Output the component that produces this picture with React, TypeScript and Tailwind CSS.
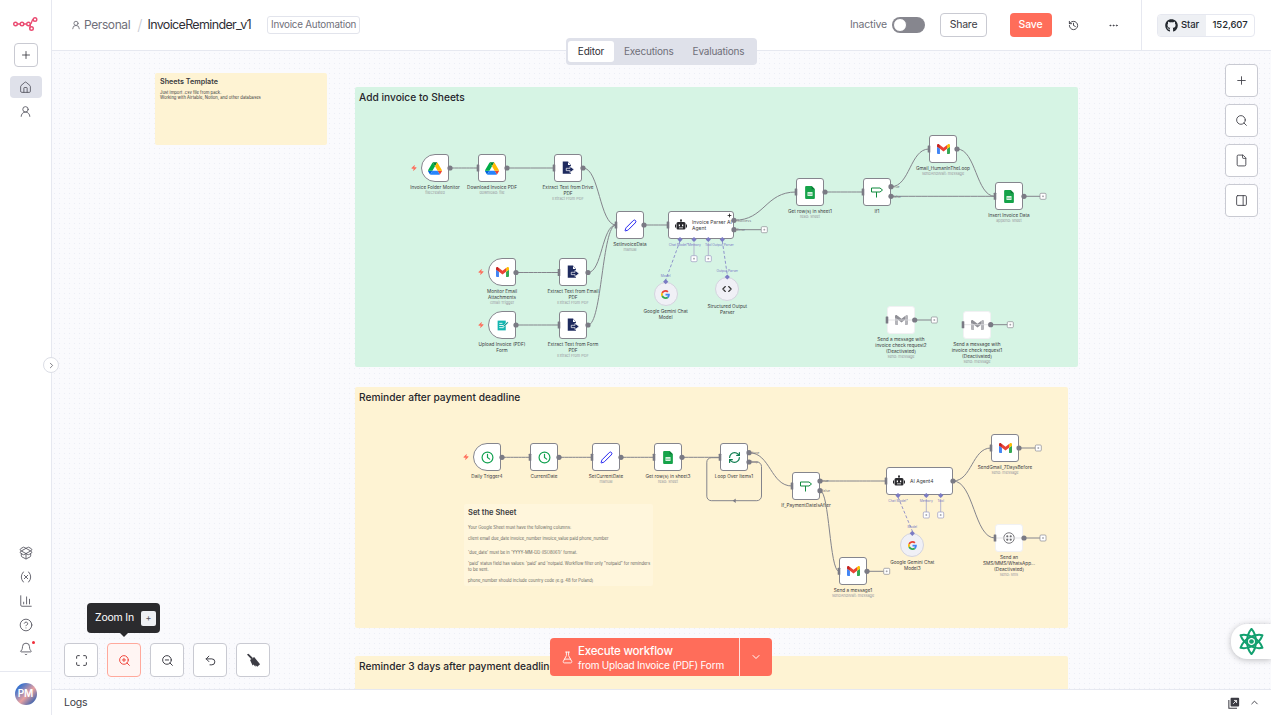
import { Bell, ChartColumn, ChevronDown, ChevronRight, ChevronUp, CircleHelp, Code, Ellipsis, File, FlaskConical, History, House, Maximize, PackageOpen, PanelRight, Pen, Plus, RefreshCw, Search, Undo2, UserRound, Variable, Zap, ZoomIn, ZoomOut } from 'lucide-react'
import React from 'react'
import { FaGithub } from 'react-icons/fa'

function DriveIcon() {
  return (
    <svg viewBox="0 0 87.3 78" className="h-[13px] w-[14px]">
      <path fill="#0066da" d="m6.6 66.85 3.85 6.65c.8 1.4 1.95 2.5 3.3 3.3l13.75-23.8h-27.5c0 1.55.4 3.1 1.2 4.5z" />
      <path fill="#00ac47" d="m43.65 25-13.75-23.8c-1.35.8-2.5 1.9-3.3 3.3l-25.4 44a9.06 9.06 0 0 0 -1.2 4.5h27.5z" />
      <path fill="#ea4335" d="m73.55 76.8c1.35-.8 2.5-1.9 3.3-3.3l1.6-2.75 7.65-13.25c.8-1.4 1.2-2.95 1.2-4.5h-27.502l5.852 11.5z" />
      <path fill="#00832d" d="m43.65 25 13.75-23.8c-1.35-.8-2.9-1.2-4.5-1.2h-18.5c-1.6 0-3.15.45-4.5 1.2z" />
      <path fill="#2684fc" d="m59.8 53h-32.3l-13.75 23.8c1.35.8 2.9 1.2 4.5 1.2h50.8c1.6 0 3.15-.45 4.5-1.2z" />
      <path fill="#ffba00" d="m73.4 26.5-12.7-22c-.8-1.4-1.95-2.5-3.3-3.3l-13.75 23.8 16.15 28h27.45c0-1.55-.4-3.1-1.2-4.5z" />
    </svg>
  )
}

function GmailIcon({ off }: { off?: boolean }) {
  if (off) {
    return (
      <svg viewBox="52 42 88 66" className="h-[10px] w-[13px]">
        <path fill="#b4b4b9" d="M58 108h14V74L52 59v43c0 3.32 2.69 6 6 6M120 108h14c3.32 0 6-2.69 6-6V59l-20 15M120 48v26l20-15v-8c0-7.42-8.47-11.65-14.4-7.2" />
        <path fill="#8f8f96" d="M72 74V48l24 18 24-18v26L96 92M52 51v8l20 15V48l-5.6-4.2c-5.94-4.45-14.4-.22-14.4 7.2" />
      </svg>
    )
  }
  return (
    <svg viewBox="52 42 88 66" className="h-[10px] w-[13px]">
      <path fill="#4285f4" d="M58 108h14V74L52 59v43c0 3.32 2.69 6 6 6" />
      <path fill="#34a853" d="M120 108h14c3.32 0 6-2.69 6-6V59l-20 15" />
      <path fill="#fbbc04" d="M120 48v26l20-15v-8c0-7.42-8.47-11.65-14.4-7.2" />
      <path fill="#ea4335" d="M72 74V48l24 18 24-18v26L96 92" />
      <path fill="#c5221f" d="M52 51v8l20 15V48l-5.6-4.2c-5.94-4.45-14.4-.22-14.4 7.2" />
    </svg>
  )
}

function GoogleIcon() {
  return (
    <svg viewBox="0 0 48 48" className="h-[9px] w-[9px]">
      <path fill="#EA4335" d="M24 9.5c3.54 0 6.71 1.22 9.21 3.6l6.85-6.85C35.9 2.38 30.47 0 24 0 14.62 0 6.51 5.38 2.56 13.22l7.98 6.19C12.43 13.72 17.74 9.5 24 9.5z" />
      <path fill="#4285F4" d="M46.98 24.55c0-1.57-.15-3.09-.38-4.55H24v9.02h12.94c-.58 2.96-2.26 5.48-4.78 7.18l7.73 6c4.51-4.18 7.09-10.36 7.09-17.65z" />
      <path fill="#FBBC05" d="M10.53 28.59c-.48-1.45-.76-2.99-.76-4.59s.27-3.14.76-4.59l-7.98-6.19C.92 16.46 0 20.12 0 24c0 3.88.92 7.54 2.56 10.78l7.97-6.19z" />
      <path fill="#34A853" d="M24 48c6.48 0 11.93-2.13 15.89-5.81l-7.73-6c-2.15 1.45-4.92 2.3-8.16 2.3-6.26 0-11.57-4.22-13.47-9.91l-7.98 6.19C6.51 42.62 14.62 48 24 48z" />
    </svg>
  )
}

function SheetsIcon() {
  return (
    <svg viewBox="0 0 18 24" className="h-[13px] w-[10px]">
      <path fill="#16a34a" d="M2 0h10l6 6v16a2 2 0 0 1-2 2H2a2 2 0 0 1-2-2V2a2 2 0 0 1 2-2z" />
      <path fill="#0d7a36" d="M12 0l6 6h-6z" />
      <path fill="#fff" d="M4.5 11h9v7.5h-9zM6 12.4v1.6h2.3v-1.6zM9.7 12.4v1.6H12v-1.6zM6 15.4V17h2.3v-1.6zM9.7 15.4V17H12v-1.6z" fillRule="evenodd" />
    </svg>
  )
}

function ExtractIcon() {
  return (
    <svg viewBox="0 0 24 24" className="h-[14px] w-[14px]">
      <path fill="#1e2a5e" d="M3 1h9l5 5.5V22H3z" />
      <path fill="#fff" d="M12 1.5v5.5h5z" />
      <path fill="#1e2a5e" stroke="#fff" strokeWidth="1.2" d="M9 12.5h6.5V9l7 5.5-7 5.5v-3.5H9z" />
    </svg>
  )
}

function FormIcon() {
  return (
    <svg viewBox="0 0 24 24" className="h-[13px] w-[13px]">
      <path fill="#12b5b0" d="M3 3h15v18H3z" />
      <path stroke="#fff" strokeWidth="1.6" d="M6 8h6M6 12h8M6 16h8" />
      <path fill="#0f8f8c" stroke="#fff" strokeWidth="1" d="M14 12l7-7 2 2-7 7-3 1z" />
    </svg>
  )
}

function SignpostIcon() {
  return (
    <svg viewBox="0 0 24 24" className="h-[12px] w-[12px]" fill="none" stroke="#0f8a3c" strokeWidth="2" strokeLinejoin="round">
      <path d="M1 4h17l5 4-5 4H1z" />
      <path d="M11 12v11" />
    </svg>
  )
}

function ClockIcon() {
  return (
    <svg viewBox="0 0 24 24" className="h-[13px] w-[13px]" fill="none" stroke="#12a150" strokeWidth="2.2" strokeLinecap="round">
      <circle cx="12" cy="12" r="10" />
      <path d="M12 6v6l4 3" />
    </svg>
  )
}

function BotIcon() {
  return (
    <svg viewBox="0 0 24 24" className="h-[12px] w-[12px]" fill="#2a2a2e">
      <circle cx="12" cy="2.5" r="2" />
      <path d="M11 3h2v3h-2z" />
      <path d="M6 6h12a3 3 0 0 1 3 3v9a3 3 0 0 1-3 3H6a3 3 0 0 1-3-3V9a3 3 0 0 1 3-3zm1.5 5v3.5h2.5V11zm6.5 0v3.5h2.5V11zM8 17v1.5h8V17z" fillRule="evenodd" />
      <path d="M0 11h2v6H0zM22 11h2v6h-2z" />
    </svg>
  )
}

function TwilioIcon() {
  return (
    <svg viewBox="0 0 24 24" className="h-[12px] w-[12px]" fill="none" stroke="#6b6b70" strokeWidth="1.8">
      <circle cx="12" cy="12" r="10.5" />
      <circle cx="8.6" cy="8.6" r="2.2" fill="#6b6b70" stroke="none" />
      <circle cx="15.4" cy="8.6" r="2.2" fill="#6b6b70" stroke="none" />
      <circle cx="8.6" cy="15.4" r="2.2" fill="#6b6b70" stroke="none" />
      <circle cx="15.4" cy="15.4" r="2.2" fill="#6b6b70" stroke="none" />
    </svg>
  )
}

function LogoIcon() {
  return (
    <svg viewBox="0 0 25 14" className="h-[14px] w-[25px]" fill="none" stroke="#ea4b71" strokeWidth="1.4">
      <circle cx="2.5" cy="7" r="1.8" />
      <circle cx="9" cy="7" r="1.8" />
      <circle cx="15.5" cy="7" r="1.8" />
      <circle cx="22" cy="2.5" r="1.8" />
      <circle cx="18.5" cy="11.5" r="1.8" />
      <path d="M4.3 7h2.9M10.8 7h2.9M17.3 7c2 0 1-4.5 2.9-4.5M17.3 7c0 2.5-.5 4.5-.6 4.5" />
    </svg>
  )
}

function ChatIcon() {
  return (
    <svg viewBox="0 0 32 32" className="h-[27px] w-[27px]" fill="none" stroke="#12a06f" strokeWidth="2.4" strokeLinejoin="round">
      <path d="M16 1C23 9 23 23 16 31C9 23 9 9 16 1z" />
      <path d="M16 1C23 9 23 23 16 31C9 23 9 9 16 1z" transform="rotate(60 16 16)" />
      <path d="M16 1C23 9 23 23 16 31C9 23 9 9 16 1z" transform="rotate(120 16 16)" />
      <circle cx="16" cy="16" r="2.8" fill="#12a06f" stroke="none" />
    </svg>
  )
}

function BroomIcon() {
  return (
    <svg viewBox="0 0 24 24" className="h-[15px] w-[15px]" fill="#3c3c44">
      <path d="M1.5 2.500L4 1l7 7-2.500 2z" />
      <path d="M6.500 11L13 6.500 22.500 18 18 22l-2.500-2.500-.5 2.500-3-3.500-1.500 1.500z" />
    </svg>
  )
}

function LogsViewIcon() {
  return (
    <svg viewBox="0 0 14 14" className="h-[12px] w-[12px]" fill="none">
      <path d="M1 3.5V13h9.500" stroke="#3c3c44" strokeWidth="1.2" />
      <rect x="3" y="1" width="10" height="10" rx="1" fill="#3c3c44" />
      <path d="M6 8l4-4M7 4h3v3" stroke="#fff" strokeWidth="1" />
    </svg>
  )
}

const penIcon = <Pen className="h-[13px] w-[13px] text-[#1d1df0]" strokeWidth={1.8} />
const gmailIcon = <GmailIcon />
const sheetsIcon = <SheetsIcon />
const ifIcon = <SignpostIcon />
const clockIcon = <ClockIcon />

type FlowNode = {
  x: number
  y: number
  label: string[]
  sub?: string
  icon: React.ReactNode
  trigger?: boolean
  off?: boolean
}

const nodes: FlowNode[] = [
  { x: 421, y: 154, label: ['Invoice Folder Monitor'], sub: 'fileCreated', icon: <DriveIcon />, trigger: true },
  { x: 478, y: 154, label: ['Download Invoice PDF'], sub: 'download: file', icon: <DriveIcon /> },
  { x: 554, y: 154, label: ['Extract Text from Drive', 'PDF'], sub: 'Extract From PDF', icon: <ExtractIcon /> },
  { x: 616, y: 211, label: ['SetInvoiceData'], sub: 'manual', icon: penIcon },
  { x: 488, y: 258, label: ['Monitor Email', 'Attachments'], sub: 'Gmail Trigger', icon: gmailIcon, trigger: true },
  { x: 559, y: 258, label: ['Extract Text from Email', 'PDF'], sub: 'Extract From PDF', icon: <ExtractIcon /> },
  { x: 488, y: 311, label: ['Upload Invoice (PDF)', 'Form'], icon: <FormIcon />, trigger: true },
  { x: 559, y: 311, label: ['Extract Text from Form', 'PDF'], sub: 'Extract From PDF', icon: <ExtractIcon /> },
  { x: 796, y: 178, label: ['Get row(s) in sheet1'], sub: 'read: sheet', icon: sheetsIcon },
  { x: 863, y: 178, label: ['If1'], icon: ifIcon },
  { x: 929, y: 135, label: ['Gmail_HumanInTheLoop'], sub: 'sendAndWait: message', icon: gmailIcon },
  { x: 995, y: 182, label: ['Insert Invoice Data'], sub: 'append: sheet', icon: sheetsIcon },
  { x: 887, y: 306, label: ['Send a message with', 'invoice check request2', '(Deactivated)'], sub: 'send: message', icon: <GmailIcon off />, off: true },
  { x: 963, y: 311, label: ['Send a message with', 'invoice check request1', '(Deactivated)'], sub: 'send: message', icon: <GmailIcon off />, off: true },
  { x: 473, y: 443, label: ['Daily Trigger4'], icon: clockIcon, trigger: true },
  { x: 530, y: 443, label: ['CurrentDate'], icon: clockIcon },
  { x: 592, y: 443, label: ['SetCurrentDate'], sub: 'manual', icon: penIcon },
  { x: 654, y: 443, label: ['Get row(s) in sheet3'], sub: 'read: sheet', icon: sheetsIcon },
  { x: 720, y: 443, label: ['Loop Over Items1'], icon: <RefreshCw className="h-[13px] w-[13px] text-[#0f7d50]" strokeWidth={2.2} /> },
  { x: 792, y: 472, label: ['If_PaymentDateIsAfter'], icon: ifIcon },
  { x: 991, y: 434, label: ['SendGmail_7DaysBefore'], sub: 'send: message', icon: gmailIcon },
  { x: 995, y: 524, label: ['Send an', 'SMS/MMS/WhatsApp...', '(Deactivated)'], sub: 'send: sms', icon: <TwilioIcon />, off: true },
  { x: 839, y: 557, label: ['Send a message1'], sub: 'sendAndWait: message', icon: gmailIcon },
]

const agents = [
  { x: 668, y: 211, w: 66, title: ['Invoice Parser AI', 'Agent'], corner: true },
  { x: 886, y: 467, w: 67, title: ['AI Agent4'], corner: false },
]

const circles = [
  { cx: 665.7, cy: 294, icon: <GoogleIcon />, label: ['Google Gemini Chat', 'Model'] },
  { cx: 727.3, cy: 289.3, icon: <Code className="h-[10px] w-[10px] text-[#333]" strokeWidth={2.6} />, label: ['Structured Output', 'Parser'] },
  { cx: 912.3, cy: 545, icon: <GoogleIcon />, label: ['Google Gemini Chat', 'Model3'] },
]

function bez(x1: number, y1: number, x2: number, y2: number) {
  const m = (x1 + x2) / 2
  return `M${x1} ${y1}C${m} ${y1} ${m} ${y2} ${x2} ${y2}`
}

const edges = [
  bez(450, 168, 478, 168),
  bez(507, 168, 554, 168),
  bez(583, 168, 616, 225),
  bez(516, 272.5, 559, 272.5),
  bez(588, 272.5, 616, 225),
  bez(516, 325, 559, 325),
  bez(588, 325, 616, 225),
  bez(644, 225, 668, 225),
  bez(734, 220.3, 796, 192),
  bez(825, 192, 863, 192),
  bez(891, 186.7, 929, 149),
  bez(891, 196.3, 995, 196.3),
  bez(957, 149, 995, 196.3),
  bez(502, 457.3, 530, 457.3),
  bez(559, 457.3, 592, 457.3),
  bez(621, 457.3, 654, 457.3),
  bez(682, 457.3, 720, 457.3),
  bez(749, 452.7, 792, 486),
  'M749 462h8a4.5 4.5 0 0 1 4.5 4.5v29.5a4.700 4.700 0 0 1-4.700 4.700h-45.5a4.5 4.5 0 0 1-4.5-4.5v-34a4.5 4.5 0 0 1 4.5-4.5h8.5',
  bez(820, 481, 886, 481),
  bez(820, 490.7, 839, 571.3),
  bez(953, 481, 991, 448),
  bez(953, 481, 995, 538),
]

const stubs = [
  [734, 229.7, 764.3],
  [1024, 196.3, 1043],
  [914.7, 320, 934.3],
  [990.7, 324.7, 1010.3],
  [1019, 448, 1038.3],
  [1024, 538, 1043],
  [867, 571.3, 886.7],
]

// grey line through deactivated nodes
const strikes = [
  [887, 915, 320],
  [963, 991, 324.7],
  [995, 1023, 538],
]

const outPorts = [
  [450, 168], [507, 168], [583, 168], [516, 272.5], [588, 272.5], [516, 325], [588, 325], [644, 225],
  [734, 220.3], [734, 229.7], [825, 192], [891, 186.7], [891, 196.3], [957, 149], [1024, 196.3],
  [914.7, 320], [990.7, 324.7], [502, 457.3], [559, 457.3], [621, 457.3], [682, 457.3], [749, 452.7], [749, 462],
  [820, 481], [820, 490.7], [953, 481], [1019, 448], [1024, 538], [867, 571.3],
]

const inPorts = [
  [478, 168], [554, 168], [616, 225], [559, 272.5], [559, 325], [668, 225], [796, 192], [863, 192], [929, 149], [995, 196.3],
  [887, 320], [963, 324.7], [530, 457.3], [592, 457.3], [654, 457.3], [720, 457.3], [792, 486], [886, 481], [991, 448], [995, 538], [839, 571.3],
]

const diamonds = [
  [680, 239.5], [694, 239.5], [708.3, 239.5], [722.3, 239.5], [665.7, 281.7], [727.3, 277],
  [898, 495.5], [926.3, 495.5], [940.7, 495.5], [912.3, 533.3],
]

const purpleStubs = [
  [694, 258.7], [708.3, 258.7], [926.3, 515], [940.7, 515],
]

const portLabels = [
  { x: 737, y: 221.5, t: 'Success' },
  { x: 737, y: 231, t: 'Error' },
  { x: 893, y: 188, t: 'true' },
  { x: 893, y: 197.5, t: 'false' },
  { x: 751, y: 454, t: 'done' },
  { x: 751, y: 463.2, t: 'loop' },
  { x: 822, y: 482.2, t: 'true' },
  { x: 822, y: 492, t: 'false' },
]

const bottomLabels = [
  { x: 678.5, y: 245.5, t: 'Chat Model*' },
  { x: 694.5, y: 245.5, t: 'Memory' },
  { x: 708.3, y: 245.5, t: 'Tool' },
  { x: 723, y: 245.5, t: 'Output Parser' },
  { x: 665.7, y: 277, t: 'Model' },
  { x: 727.3, y: 272, t: 'Output Parser' },
  { x: 898, y: 502, t: 'Chat Model*' },
  { x: 926.3, y: 502, t: 'Memory' },
  { x: 940.7, y: 502, t: 'Tool' },
  { x: 912.3, y: 528, t: 'Model' },
]

function Node({ n }: { n: FlowNode }) {
  return (
    <div className="absolute w-[28px]" style={{ left: n.x - 52, top: n.y - 51 }}>
      {n.trigger && <Zap className="absolute top-[11px] -left-[10px] h-[6px] w-[6px] fill-[#ff6d5a] text-[#ff6d5a]" />}
      <div className={`flex h-[28px] w-[28px] items-center justify-center border bg-white ${n.trigger ? 'rounded-l-[14px] rounded-r-[3px]' : 'rounded-[3px]'} ${n.off ? 'border-[#f1f1f3]' : 'border-[#85858d]'}`}>
        {n.icon}
      </div>
      <NodeLabel label={n.label} sub={n.sub} />
    </div>
  )
}

function NodeLabel({ label, sub }: { label: string[]; sub?: string }) {
  return (
    <div className="absolute top-[calc(100%+2px)] left-1/2 w-[80px] -translate-x-1/2 text-center text-[4.7px] leading-[6px] text-[#3a3a40]">
      {label.map((l) => (
        <div key={l} className="whitespace-nowrap">{l}</div>
      ))}
      {sub && <div className="text-[3.8px] text-[#9a9aa2]">{sub}</div>}
    </div>
  )
}

function SideIcon({ children }: { children: React.ReactNode }) {
  return <div className="flex h-[24px] w-full items-center justify-center text-[#55555f]">{children}</div>
}

function ToolBtn({ children, active }: { children: React.ReactNode; active?: boolean }) {
  return (
    <div className={`flex h-[34px] w-[34px] items-center justify-center rounded-[4px] border ${active ? 'border-[#ffa99c] bg-[#fff5f3] text-[#f0443a]' : 'border-[#c9cad2] bg-white text-[#3c3c44]'}`}>
      {children}
    </div>
  )
}

export default function App() {
  return (
    <div className="flex h-screen w-screen overflow-hidden bg-white font-[family-name:Inter] text-[#2f2f36]">
      <aside className="relative z-20 flex w-[52px] shrink-0 flex-col border-r border-[#e6e8f0] bg-white">
        <div className="mt-[17px] flex justify-center"><LogoIcon /></div>
        <div className="mx-auto mt-[12px] flex h-[24px] w-[24px] items-center justify-center rounded-[4px] border border-[#c9cad2]">
          <Plus className="h-[12px] w-[12px]" strokeWidth={1.6} />
        </div>
        <div className="mx-auto mt-[9px] flex h-[22px] w-[32px] items-center justify-center rounded-[4px] bg-[#dfe1ea] text-[#55555f]">
          <House className="h-[13px] w-[13px]" strokeWidth={1.6} />
        </div>
        <div className="mt-[1px]"><SideIcon><UserRound className="h-[13px] w-[13px]" strokeWidth={1.6} /></SideIcon></div>
        <div className="mt-auto flex flex-col pb-[10.5px]">
          <SideIcon><PackageOpen className="h-[14px] w-[14px]" strokeWidth={1.5} /></SideIcon>
          <SideIcon><Variable className="h-[14px] w-[14px]" strokeWidth={1.5} /></SideIcon>
          <SideIcon><ChartColumn className="h-[14px] w-[14px]" strokeWidth={1.5} /></SideIcon>
          <SideIcon><CircleHelp className="h-[14px] w-[14px]" strokeWidth={1.5} /></SideIcon>
          <SideIcon>
            <div className="relative">
              <Bell className="h-[14px] w-[14px]" strokeWidth={1.5} />
              <span className="absolute -top-[1px] -right-[2px] h-[3px] w-[3px] rounded-full bg-[#f02d3a]" />
            </div>
          </SideIcon>
        </div>
        <div className="flex h-[44px] items-center justify-center border-t border-[#e6e8f0]">
          <div className="flex h-[22px] w-[22px] items-center justify-center rounded-full bg-[linear-gradient(135deg,#2f6fd0_15%,#e8a0a0_55%,#2f5fb0_90%)] text-[10px] font-semibold text-white">PM</div>
        </div>
        <div className="absolute top-[357px] -right-[8px] flex h-[16px] w-[16px] items-center justify-center rounded-full border border-[#dcdee6] bg-white text-[#55555f]">
          <ChevronRight className="h-[9px] w-[9px]" />
        </div>
      </aside>

      <main className="relative flex min-w-0 flex-1 flex-col">
        <header className="flex h-[51px] shrink-0 items-center border-b border-[#e6e8f0] bg-white pl-[19px]">
          <UserRound className="h-[10px] w-[10px] text-[#6b6b75]" />
          <span className="ml-[3px] text-[12px] tracking-[-0.4px] text-[#6f6f79]">Personal</span>
          <span className="ml-[7px] text-[15px] font-light text-[#c9cad2]">/</span>
          <span className="ml-[5px] text-[12.5px] tracking-[-0.65px] text-[#2f2f36]">InvoiceReminder_v1</span>
          <span className="ml-[16px] flex h-[18px] items-center rounded-[3px] border border-[#e2e4ec] px-[3px] text-[9.8px] tracking-[-0.2px] text-[#6f6f79]">Invoice Automation</span>

          <span className="ml-auto text-[10.5px] tracking-[-0.2px] text-[#6f6f79]">Inactive</span>
          <div className="ml-[5px] flex h-[16px] w-[33px] items-center rounded-full bg-[#86868e] px-[1px]">
            <div className="h-[14px] w-[14px] rounded-full border border-[#86868e] bg-white" />
          </div>
          <div className="ml-[15px] flex h-[24px] w-[47px] items-center justify-center rounded-[4px] border border-[#c9cad2] text-[10.5px] tracking-[-0.2px] text-[#3c3c44]">Share</div>
          <div className="ml-[22.5px] flex h-[24px] w-[42px] items-center justify-center rounded-[4px] bg-[#ff6d5a] text-[10.5px] font-medium tracking-[-0.2px] text-white">Save</div>
          <History className="ml-[16px] h-[11px] w-[11px] text-[#3c3c44]" />
          <Ellipsis className="ml-[29px] h-[11px] w-[11px] text-[#3c3c44]" />
          <div className="ml-[22.5px] flex h-full items-center border-l border-[#e6e8f0] pr-[16px] pl-[15px]">
            <div className="flex h-[23px] items-center overflow-hidden rounded-[4px] border border-[#e6e8f0] text-[9.5px] font-medium tracking-[-0.1px] text-[#24292f]">
              <div className="flex h-full w-[48px] items-center justify-center gap-[3px] bg-[#eef0f4]">
                <FaGithub className="h-[13px] w-[13px]" />
                Star
              </div>
              <div className="flex h-full w-[48px] items-center justify-center">152,607</div>
            </div>
          </div>
        </header>

        <div className="absolute top-[38px] left-[514px] z-10 flex h-[27px] w-[191px] items-center rounded-[4px] bg-[#dfe1ea] px-[2px] text-[10px] tracking-[-0.2px] text-[#6f6f79]">
          <div className="flex h-[21px] w-[46px] items-center justify-center rounded-[3px] bg-white text-[#2f2f36]">Editor</div>
          <div className="ml-[10px]">Executions</div>
          <div className="ml-[19px]">Evaluations</div>
        </div>

        <div className="relative min-h-0 flex-1 overflow-hidden bg-[#fafafd] bg-[radial-gradient(circle,#eceef6_0.7px,transparent_0.8px)] bg-[size:5px_5px]">
          <div className="absolute top-[22px] left-[103px] h-[72px] w-[172px] rounded-[2px] bg-[#fef3d3] px-[5px] py-[4px] text-[#3a3a40]">
            <div className="text-[7.2px] leading-[10px] font-semibold">Sheets Template</div>
            <div className="mt-[3px] text-[4.2px] leading-[5px]">Just import .csv file from pack.<br />Working with Airtable, Notion, and other databases</div>
          </div>
          <div className="absolute top-[36px] left-[303px] h-[280px] w-[723px] rounded-[2px] bg-[#d6f4e4] px-[4px] py-[3px] text-[10.2px] font-medium text-[#26262c]">Add invoice to Sheets</div>
          <div className="absolute top-[336px] left-[303px] h-[241px] w-[713px] rounded-[2px] bg-[#fef3d3] px-[4px] py-[3px] text-[10.2px] font-medium text-[#26262c]">Reminder after payment deadline</div>
          <div className="absolute top-[605px] left-[303px] h-[60px] w-[713px] rounded-[2px] bg-[#fef3d3] px-[4px] py-[3px] text-[10.2px] font-medium text-[#26262c]">Reminder 3 days after payment deadline</div>
          <div className="absolute top-[453px] left-[412px] h-[82px] w-[189px] rounded-[2px] bg-[#fff6dc] px-[4px] py-[3px] text-[4.15px] leading-[6px] whitespace-nowrap text-[#66665f]">
            <div className="text-[7.5px] leading-[12px] font-semibold text-[#3a3a40]">Set the Sheet</div>
            <div className="mt-[5.7px]">Your Google Sheet must have the following columns:</div>
            <div className="mt-[5.3px]">client email due_date invoice_number invoice_value paid phone_number</div>
            <div className="mt-[7.7px]">'due_date' must be in 'YYYY-MM-DD (ISO8061)' format.</div>
            <div className="mt-[5px]">'paid' status field has values: 'paid' and 'notpaid. Workflow filter only "notpaid" for reminders<br />to be sent.</div>
            <div className="mt-[5px]">phone_number should include country code (e.g. 48 for Poland)</div>
          </div>

          {nodes.map((n) => (
            <Node key={n.label.join() + n.x} n={n} />
          ))}
          {agents.map((a) => (
            <div key={a.x} className="absolute flex h-[28px] items-center rounded-[3px] border border-[#85858d] bg-white pl-[6px]" style={{ left: a.x - 52, top: a.y - 51, width: a.w }}>
              <BotIcon />
              <div className="ml-[5px] text-[5px] leading-[6.5px] whitespace-nowrap text-[#3a3a40]">
                {a.title.map((l) => <div key={l}>{l}</div>)}
              </div>
              {a.corner && <Plus className="absolute top-[1px] right-[1px] h-[5px] w-[5px] text-[#222]" strokeWidth={4} />}
            </div>
          ))}
          {circles.map((c) => (
            <div key={c.cx} className="absolute h-[24px] w-[24px]" style={{ left: c.cx - 64, top: c.cy - 63 }}>
              <div className="flex h-[24px] w-[24px] items-center justify-center rounded-full border border-[#d4d4de] bg-[#f0f0f6]">{c.icon}</div>
              <NodeLabel label={c.label} />
            </div>
          ))}

          <svg className="pointer-events-none absolute inset-0 h-full w-full" viewBox="52 51 1219 638" fill="none">
            {edges.map((d) => <path key={d} d={d} stroke="#84848c" strokeWidth="1" />)}
            {strikes.map(([a, b, y]) => <path key={a} d={`M${a} ${y}H${b}`} stroke="#dcdce0" strokeWidth="0.8" />)}
            {stubs.map(([x, y, bx]) => (
              <g key={x}>
                <path d={`M${x} ${y}H${bx - 3}`} stroke="#84848c" />
                <rect x={bx - 3} y={y - 3} width="6" height="6" rx="1" fill="#fff" stroke="#8a8a92" strokeWidth="0.7" />
                <path d={`M${bx - 1} ${y}h2M${bx} ${y - 1}v2`} stroke="#55555f" strokeWidth="0.4" />
              </g>
            ))}
            <path d="M680 241L665.7 280M722.3 241L727.3 275M898 497L912.3 531" stroke="#7b7bc4" strokeWidth="0.8" strokeDasharray="3 2" />
            {purpleStubs.map(([x, y]) => (
              <g key={x + y}>
                <path d={`M${x} ${y - 16}V${y - 3}`} stroke="#b4b4cf" />
                <rect x={x - 3} y={y - 3} width="6" height="6" rx="1" fill="#fff" stroke="#9a9ac0" strokeWidth="0.7" />
                <path d={`M${x - 1} ${y}h2M${x} ${y - 1}v2`} stroke="#55555f" strokeWidth="0.4" />
              </g>
            ))}
            {outPorts.map(([x, y]) => <circle key={`${x}-${y}`} cx={x} cy={y} r="2.6" fill="#7a7a84" />)}
            {inPorts.map(([x, y]) => <rect key={`${x}-${y}`} x={x - 1.3} y={y - 3.5} width="2.6" height="7" rx="0.5" fill="#7a7a84" />)}
            {diamonds.map(([x, y]) => <path key={`${x}-${y}`} d={`M${x} ${y - 2.6}l2.6 2.6l-2.6 2.6l-2.6-2.6z`} fill="#7b7bc4" />)}
            <path d="M735.7 498.5l-3 2.2l3 2.2z" fill="#7a7a84" />
            {portLabels.map((l) => <text key={`${l.x}-${l.y}`} x={l.x} y={l.y} fontSize="3.5" fill="#77777f">{l.t}</text>)}
            {bottomLabels.map((l) => <text key={`${l.x}-${l.y}`} x={l.x} y={l.y} fontSize="3.3" fill="#7b7bc4" textAnchor="middle">{l.t}</text>)}
          </svg>

          <div className="absolute top-[13px] right-[13px] flex w-[33px] flex-col gap-[7px]">
            {[Plus, Search, File, PanelRight].map((Icon, i) => (
              <div key={i} className="flex h-[33px] items-center justify-center rounded-[4px] border border-[#c9cad2] bg-white text-[#3c3c44]">
                <Icon className="h-[13px] w-[13px]" strokeWidth={1.6} />
              </div>
            ))}
          </div>

          <div className="absolute bottom-[12px] left-[12px] flex gap-[9px]">
            <ToolBtn><Maximize className="h-[13px] w-[13px]" strokeWidth={1.8} /></ToolBtn>
            <ToolBtn active><ZoomIn className="h-[13px] w-[13px]" strokeWidth={1.8} /></ToolBtn>
            <ToolBtn><ZoomOut className="h-[13px] w-[13px]" strokeWidth={1.8} /></ToolBtn>
            <ToolBtn><Undo2 className="h-[13px] w-[13px]" strokeWidth={1.8} /></ToolBtn>
            <ToolBtn><BroomIcon /></ToolBtn>
          </div>

          <div className="absolute top-[552px] left-[35px] flex h-[30px] w-[73px] items-center rounded-[4px] bg-[#2b2b2e] pl-[8px] text-[10.5px] tracking-[-0.2px] whitespace-nowrap text-white">
            Zoom In
            <span className="ml-[7px] flex h-[15px] w-[15px] items-center justify-center rounded-[2px] bg-[#eef0f4] text-[9px] text-[#55555f]">+</span>
            <span className="absolute -bottom-[4px] left-[33px] h-0 w-0 border-x-[4px] border-t-[4px] border-x-transparent border-t-[#2b2b2e]" />
          </div>

          <div className="absolute bottom-[13px] left-[498px] flex h-[38px] w-[222px] rounded-[4px] bg-[#ff6d5a] text-white">
            <div className="flex w-[190px] items-center border-r border-white/80 pl-[11px]">
              <FlaskConical className="h-[13px] w-[13px]" strokeWidth={1.6} />
              <div className="ml-[4px]">
                <div className="text-[11.5px] leading-[16px] font-medium tracking-[-0.2px]">Execute workflow</div>
                <div className="text-[10px] leading-[13px] tracking-[-0.2px]">from Upload Invoice (PDF) Form</div>
              </div>
            </div>
            <div className="flex flex-1 items-center justify-center">
              <ChevronDown className="h-[12px] w-[12px] text-white" strokeWidth={2} />
            </div>
          </div>

          <div className="absolute top-[573px] right-0 flex h-[35px] w-[40px] items-center justify-center rounded-l-[16px] bg-white shadow-[0_1px_6px_rgba(0,0,0,0.25)]">
            <ChatIcon />
          </div>
        </div>

        <footer className="z-10 flex h-[26px] shrink-0 items-center border-t border-[#e6e8f0] bg-white pr-[11px] pl-[12px] text-[10.5px] tracking-[-0.2px] text-[#3c3c44]">
          Logs
          <span className="ml-auto"><LogsViewIcon /></span>
          <ChevronUp className="ml-[9px] h-[11px] w-[11px]" />
        </footer>
      </main>
    </div>
  )
}
